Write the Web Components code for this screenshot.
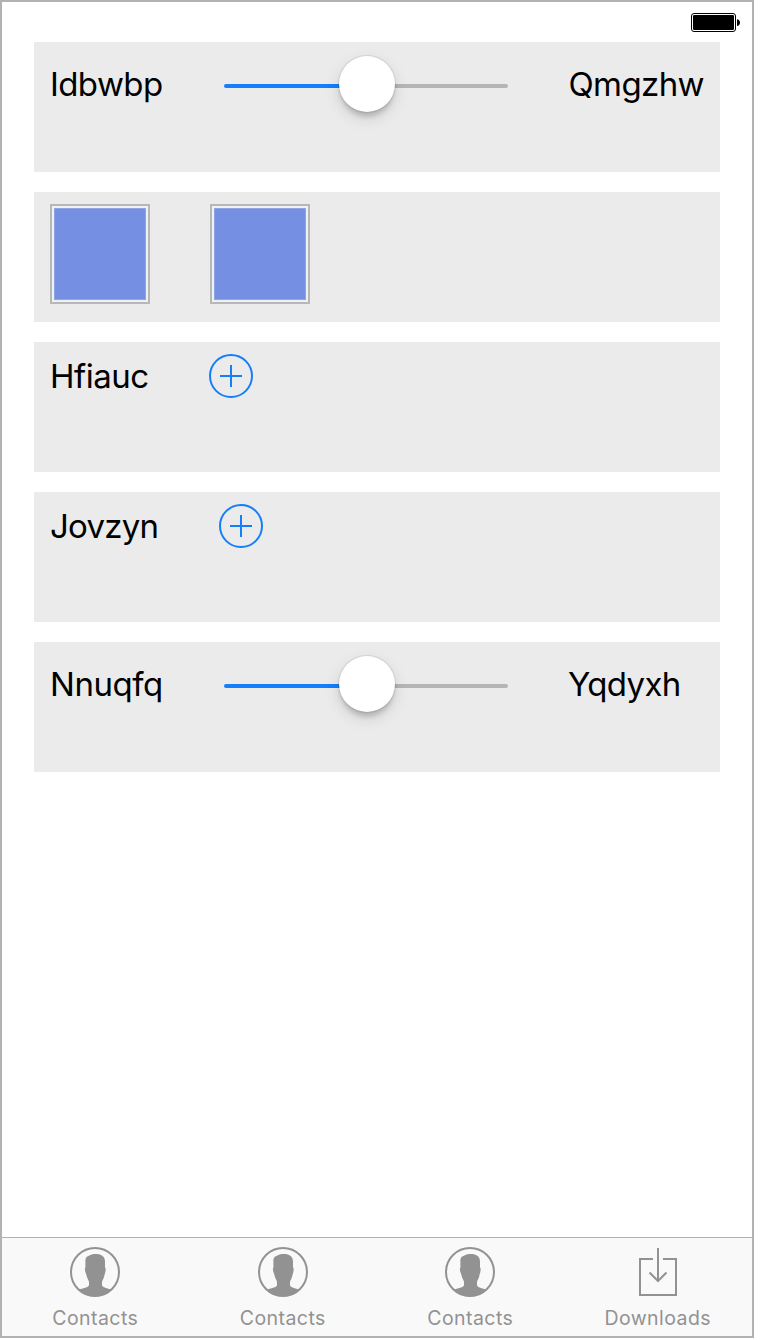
<!DOCTYPE html>
<html lang="en">
<head>
<meta charset="utf-8">
<title>Controls</title>
<style>
html, body { margin: 0; background: #fff; }
body { font-family: Inter, "Liberation Sans", sans-serif; color: #000; }
</style>
</head>
<body>
<phone-screen>
  <status-bar slot="status"></status-bar>
  <control-row><text-label style="--w:173px;--top:8px;--ls:-.6px">Idbwbp</text-label><range-slider></range-slider><text-label style="--top:8px;--pad:.8px;--ls:-.6px">Qmgzhw</text-label></control-row>
  <control-row><color-well></color-well><color-well></color-well></control-row>
  <control-row><text-label style="--w:157px;--ls:-.5px">Hfiauc</text-label><add-button></add-button></control-row>
  <control-row><text-label style="--w:167px;--ls:-.75px">Jovzyn</text-label><add-button></add-button></control-row>
  <control-row><text-label style="--w:173px;--top:8px;--ls:-.45px">Nnuqfq</text-label><range-slider></range-slider><text-label style="--top:8px;--ls:-.65px">Yqdyxh</text-label></control-row>
  <tab-bar slot="tabs">
    <tab-item icon="contact">Contacts</tab-item>
    <tab-item icon="contact">Contacts</tab-item>
    <tab-item icon="contact">Contacts</tab-item>
    <tab-item icon="download">Downloads</tab-item>
  </tab-bar>
</phone-screen>
<script>
const define = (name, html) => customElements.define(name, class extends HTMLElement {
  constructor() {
    super();
    this.attachShadow({ mode: 'open' }).innerHTML = html;
  }
});

define('phone-screen', `<style>
:host { display: flex; flex-direction: column; box-sizing: border-box; width: 754px; height: 1338px; border: 2px solid #b2b2b2; background: #fff; }
main { flex: 1; display: flex; flex-direction: column; gap: 20px; padding: 0 32px; }
</style><slot name="status"></slot><main><slot></slot></main><slot name="tabs"></slot>`);

define('status-bar', `<style>
:host { display: flex; justify-content: flex-end; height: 40px; }
svg { margin: 11px 11px 0 0; }
</style><svg width="50" height="20" viewBox="0 0 50 20"><rect x=".5" y=".5" width="44" height="18" rx="2.5" fill="#fff" stroke="#000"/><rect x="2" y="2" width="41" height="15" rx="1.2"/><path d="M46 6.2c1.5 0 3 1.3 3 3.4s-1.5 3.4-3 3.4z"/></svg>`);

define('control-row', `<style>
:host { display: flex; align-items: flex-start; box-sizing: border-box; height: 130px; padding: 12px 16px; background: #ebebeb; }
</style><slot></slot>`);

define('text-label', `<style>
:host { display: block; width: var(--w, auto); margin-top: var(--top, 0); padding-left: var(--pad, 0); font-size: 33px; line-height: 44px; letter-spacing: var(--ls); white-space: nowrap; }
</style><slot></slot>`);

define('range-slider', `<style>
:host { display: block; position: relative; flex: none; width: 286px; height: 60px; margin-right: 59px; }
.track { box-sizing: border-box; width: 284px; height: 4px; margin: 30px 0 0 1px; border-radius: 2px; background: linear-gradient(90deg, #147efb 50%, #b5b5b5 50%); }
.thumb { position: absolute; left: 116px; top: 2px; width: 56px; height: 56px; border-radius: 50%; background: #fff; box-shadow: 0 0 1px 1px rgba(0,0,0,.09), 0 6px 4px -1px rgba(0,0,0,.14), 0 6px 16px rgba(0,0,0,.13); }
</style><div class="track"></div><div class="thumb"></div>`);

define('color-well', `<style>
:host { display: block; box-sizing: border-box; width: 100px; height: 100px; margin-right: 60px; border: 2px solid #b7b7b7; background: #eff1f7; padding: 2px; }
div { box-sizing: border-box; height: 92px; background: #758fe2; border: 1px solid #8fa3e7; }
</style><div></div>`);

define('add-button', `<style>
:host { display: block; width: 46px; height: 44px; }
svg { display: block; }
</style><svg width="46" height="44" viewBox="0 0 46 44" fill="none" stroke="#147efb" stroke-width="2"><circle cx="24" cy="22" r="21"/><path d="M13 22H35M24 11V33"/></svg>`);

define('tab-bar', `<style>
:host { display: flex; box-sizing: border-box; height: 99px; border-top: 1px solid #b2b2b2; background: #f9f9f9; }
</style><slot></slot>`);

const icons = {
  contact: `<clipPath id="c"><circle cx="25" cy="25" r="24.5"/></clipPath><circle cx="25" cy="25" r="24" fill="none" stroke="#929292" stroke-width="2"/><path clip-path="url(#c)" fill="#929292" d="M25.5 7C30 7 35 8.6 35 14.5V20.5C36 20.7 35.8 24.5 34.6 27.5C34.2 31 32.6 32.5 32 35V38C32.4 41 37 40.8 42 43L40 51H10L8 43C13 40.8 18.6 41 19 38V35C18.5 32.5 16.8 31 16.3 27.5C14.9 24.5 14.5 20.7 15.4 20.5V14.5C15 10.5 17.5 9 19 8.7C20.5 7.6 22.8 7 25.5 7Z"/>`,
  download: `<path fill="none" stroke="#929292" stroke-width="2" d="M20 12H7V48H43V12H30M25 1V33.5M16.5 25.5L25 34L33.5 25.5"/>`
};
customElements.define('tab-item', class extends HTMLElement {
  constructor() {
    super();
    this.attachShadow({ mode: 'open' });
  }
  connectedCallback() {
    this.shadowRoot.innerHTML = `<style>
:host { flex: 1 1 0; display: flex; flex-direction: column; align-items: center; padding-top: 9px; font-size: 19.5px; line-height: 24px; letter-spacing: .45px; color: #929292; }
svg { display: block; margin-right: 1px; }
span { margin: 9px 1px 0 0; }
</style><svg width="50" height="50" viewBox="0 0 50 50">${icons[this.getAttribute('icon')]}</svg><span><slot></slot></span>`;
  }
});
</script>
</body>
</html>
